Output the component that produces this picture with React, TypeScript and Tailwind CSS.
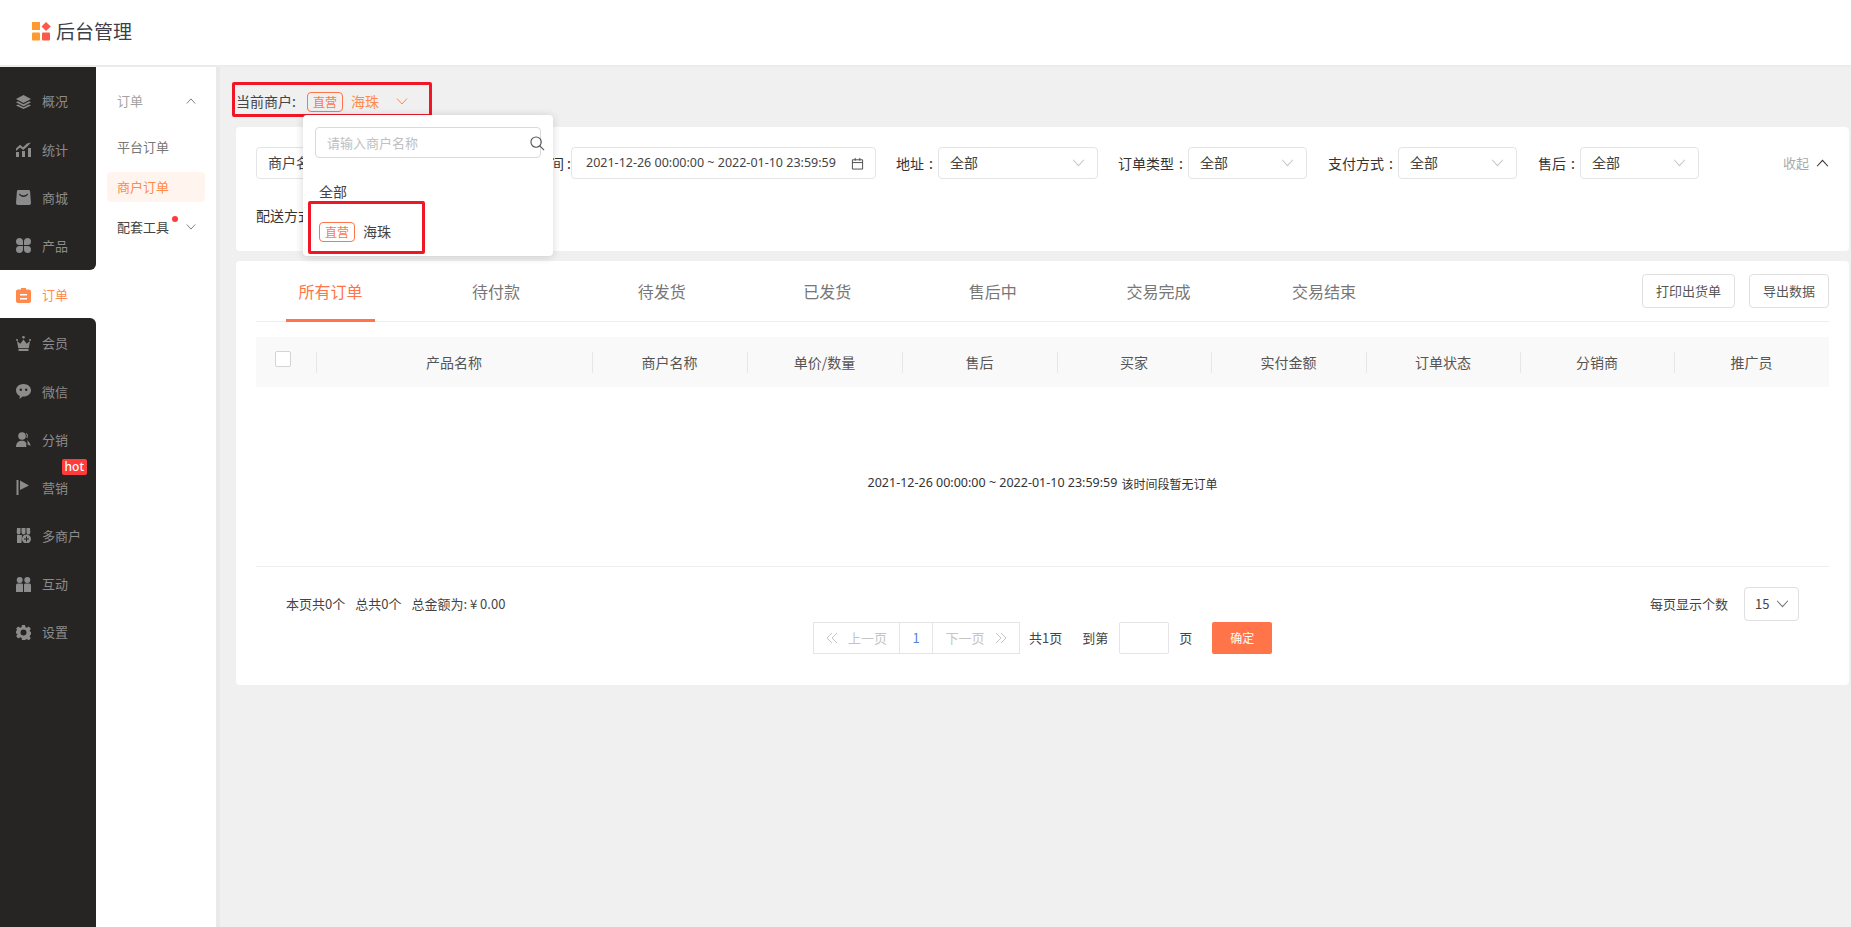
import React from "react";

const orange = "#ff7448";

const icons: Record<string, React.ReactNode> = {
  layers: (
    <>
      <path d="M7.5 1 15 5l-7.5 4L0 5z" />
      <path d="M1.8 7.2 7.5 10.2l5.7-3L15 8.3l-7.5 4-7.5-4z" />
      <path d="M2 10.4 7.5 13.3 13 10.4l2 1-7.5 3.6L0 11.4z" />
    </>
  ),
  chart: (
    <>
      <path d="M0 6.5 4 2.8l3 2.4L11 1.5 15 .5 11.8 4 7.2 8 4 5.6 0 9z" />
      <rect x="0" y="10" width="3" height="5" />
      <rect x="6" y="9" width="3" height="6" />
      <rect x="12" y="6" width="3" height="9" />
    </>
  ),
  bag: <path fillRule="evenodd" d="M2.5 0h10c1 0 1.5.5 1.6 1.5L15 13c0 1.2-.7 2-2 2H2c-1.3 0-2-.8-2-2l.9-11.5C1 .5 1.5 0 2.5 0zM3.5 3.5 3 4.5C4 6 5.7 7 7.5 7S11 6 12 4.5l-.5-1c-1 1.200-2.500 2-4 2s-3-.8-4-2z" />,
  clover: (
    <>
      <path d="M3.5 0C5.5 0 7 1.5 7 3.5V7H3.5a3.5 3.5 0 0 1 0-7z" />
      <path d="M11.5 0C9.5 0 8 1.5 8 3.5V7h3.5a3.5 3.5 0 0 0 0-7z" />
      <path d="M3.5 15C5.5 15 7 13.5 7 11.5V8H3.5a3.5 3.5 0 0 0 0 7z" />
      <path d="M11.5 15C9.5 15 8 13.5 8 11.5V8h3.5a3.5 3.5 0 0 1 0 7z" />
    </>
  ),
  order: <path fillRule="evenodd" d="M5 0h5v1.5h3c1.2 0 2 .8 2 2V13c0 1.2-.8 2-2 2H2c-1.2 0-2-.8-2-2V3.5c0-1.2.8-2 2-2h3zM4 6v1.5h7V6zM4 10v1.5h7V10z" />,
  crown: (
    <>
      <circle cx="7.5" cy="1.3" r="1.3" />
      <circle cx="1" cy="4" r="1" />
      <circle cx="14" cy="4" r="1" />
      <path d="M1 5l3.3 2.8L7.5 3.5l3.2 4.3L14 5l-1.2 7H2.2z" />
      <rect x="2.5" y="12.8" width="10" height="2.2" />
    </>
  ),
  chat: <path fillRule="evenodd" d="M7.5 0C11.7 0 15 2.8 15 6.3s-3.3 6.3-7.500 6.300h-.9L3.500 15l.3-3C1.500 11 0 8.800 0 6.300 0 2.800 3.300 0 7.500 0zM4.800 4.500a1.200 1.200 0 1 0 0 2.400 1.200 1.200 0 0 0 0-2.400zM10.200 4.500a1.200 1.200 0 1 0 0 2.400 1.200 1.200 0 0 0 0-2.400z" />,
  users: (
    <>
      <circle cx="6" cy="4" r="3.8" />
      <path d="M0 15c0-3.5 2-6 5-6.200h2c1.500.3 2.500 1 3.300 2.300V15z" />
      <path d="M10.500 1c1.500 1 2 3.500.6 5.200l-.8-.6c.8-1.300.6-2.900-.4-3.800zM11.500 8l2.500 3.500.6 2.500-3-1.500z" />
    </>
  ),
  flag: (
    <>
      <rect x="0.5" y="0" width="2" height="15" />
      <path d="M4 .5 13 5.500 4 10z" />
    </>
  ),
  store: (
    <>
      <path d="M1 0h3.500v4.500a1.800 1.800 0 0 1-3.800 0zM5.500 0h4v4.500a2 2 0 0 1-4 0zM10.500 0H14l.3 4.500a1.800 1.800 0 0 1-3.800 0z" />
      <path d="M1 7h5l-.5 8H1z" />
      <path fillRule="evenodd" d="M10.500 6.500a4.500 4.500 0 1 1 0 9 4.500 4.500 0 0 1 0-9zM10 8.500V10.500H8V11.500h2v2h1v-2h2v-1h-2v-2z" />
    </>
  ),
  pair: (
    <>
      <circle cx="3.7" cy="3" r="3" />
      <circle cx="11.3" cy="3" r="3" />
      <path d="M0 8.500C0 7 1 6.500 2 6.500h3.500c1 0 1.500.5 1.500 1.500v7H0z" />
      <path d="M8 8c0-1 .5-1.500 1.500-1.500H13c1 0 2 .5 2 2V15H8z" />
    </>
  ),
  gear: <path fillRule="evenodd" d="M6 0h3l.5 2.200 1.400.6L12.800 1.500l2 2.200-1.200 1.900.6 1.400L15 6.500v3l-.8.5-.6 1.400 1.200 1.800-2 2.100-1.900-1.200-1.400.6L9 15H6l-.5-2.200-1.400-.6-1.900 1.200-2-2.100 1.200-1.800-.6-1.400L0 9.500v-3l.4-.5.6-1.400L0 3.700l2.200-2.200 1.900 1.300 1.400-.6zM7.500 4.500a3 3 0 1 0 0 6 3 3 0 0 0 0-6z" />,
};

function Glyph({ name }: { name: string }) {
  return (
    <svg viewBox="0 0 15 15" className="w-[15px] h-[15px] shrink-0" fill="currentColor">
      {icons[name]}
    </svg>
  );
}

function Chevron({ up, className }: { up?: boolean; className?: string }) {
  return (
    <svg viewBox="0 0 12 7" className={className} fill="none" stroke="currentColor" strokeWidth="1">
      <path d={up ? "M1 6.5 6 1l5 5.5" : "M1 .5 6 6l5-5.5"} />
    </svg>
  );
}

function DoubleChevron({ right }: { right?: boolean }) {
  return (
    <svg viewBox="0 0 12 12" className="w-[12px] h-[12px]" fill="none" stroke="#c4c4c4" strokeWidth="1">
      <path d={right ? "M1 1l5 5-5 5M6 1l5 5-5 5" : "M11 1 6 6l5 5M6 1 1 6l5 5"} />
    </svg>
  );
}

function NavItem({ icon, label, active, children }: { icon: string; label: string; active?: boolean; children?: React.ReactNode }) {
  return (
    <div className={`relative flex items-center h-[48.2px] pl-4 gap-[11px] text-[13px] ${active ? "text-[#ff8a4c]" : "text-[#8c8c8c]"}`}>
      <Glyph name={icon} />
      <span>{label}</span>
      {children}
    </div>
  );
}

function Tag() {
  return (
    <span className="inline-flex items-center justify-center w-[36px] h-[20px] rounded-[4px] border border-[#ff7448] text-[#ff7448] text-[12px] leading-none">
      直营
    </span>
  );
}

function Select({ width, label }: { width: string; label?: string }) {
  return (
    <div className={`flex items-center justify-between h-[32px] pl-[11px] pr-[12px] border border-[#e4e4e4] rounded-[4px] text-[14px] text-[#444] ${width}`}>
      <span className="mt-[-2px]">{label ?? "全部"}</span>
      <Chevron className="w-[13px] h-[8px] text-[#c8c8c8]" />
    </div>
  );
}

function Field({ label, width, gap }: { label: string; width: string; gap: string }) {
  return (
    <div className={`flex items-center shrink-0 ${gap}`}>
      <span className="text-[14px] text-[#333] whitespace-nowrap">{label}</span>
      <span className="w-[14px] text-center text-[14px] text-[#333]">:</span>
      <Select width={width} />
    </div>
  );
}

export default function App() {
  const upper = [
    { icon: "layers", label: "概况" },
    { icon: "chart", label: "统计" },
    { icon: "bag", label: "商城" },
    { icon: "clover", label: "产品" },
  ];
  const lower = [
    { icon: "crown", label: "会员" },
    { icon: "chat", label: "微信" },
    { icon: "users", label: "分销" },
    { icon: "flag", label: "营销" },
    { icon: "store", label: "多商户" },
    { icon: "pair", label: "互动" },
    { icon: "gear", label: "设置" },
  ];
  const tabs = ["所有订单", "待付款", "待发货", "已发货", "售后中", "交易完成", "交易结束"];
  const columns = [
    { title: "产品名称", width: "w-[276px]" },
    { title: "商户名称", width: "w-[155px]" },
    { title: "单价/数量", width: "w-[155px]" },
    { title: "售后", width: "w-[155px]" },
    { title: "买家", width: "w-[154px]" },
    { title: "实付金额", width: "w-[155px]" },
    { title: "订单状态", width: "w-[154px]" },
    { title: "分销商", width: "w-[154px]" },
    { title: "推广员", width: "flex-1" },
  ];

  return (
    <div className="h-[927px] flex flex-col bg-[#f0f0f0] overflow-hidden font-['Noto_Sans_CJK_SC','Noto_Sans',sans-serif]">
      <header className="h-[65px] shrink-0 mb-[2px] bg-white flex items-center pl-8 pb-[3px] shadow-[0_1px_2px_rgba(0,0,0,0.04)]">
        <svg viewBox="0 0 19 19" className="w-[19px] h-[19px] mr-[5px]">
          <rect x="0" y="0" width="8" height="8" fill="#ff9a2e" />
          <rect x="0" y="10.5" width="8" height="8" rx="1" fill="#ff9a2e" />
          <path d="M14 0l4.800 4.500L14 9 9.500 4.500z" fill="#fb5a4a" />
          <rect x="10" y="10.5" width="8" height="8" rx="1" fill="#fb5a4a" />
        </svg>
        <span className="text-[19px] text-[#3d3f48]">后台管理</span>
      </header>

      <div className="flex flex-1 min-h-0">
        <aside className="w-[96px] shrink-0 flex flex-col bg-white">
          <div className="h-[203px] bg-[#262524] rounded-br-[6px] pt-[10px]">
            {upper.map((item) => (
              <NavItem key={item.label} icon={item.icon} label={item.label} />
            ))}
          </div>
          <div className="h-[48px] pt-[1px]">
            <NavItem icon="order" label="订单" active />
          </div>
          <div className="flex-1 bg-[#262524] rounded-tr-[6px] pt-[1px]">
            {lower.map((item) => (
              <NavItem key={item.label} icon={item.icon} label={item.label}>
                {item.label === "营销" && (
                  <span className="absolute right-[9px] top-[-5px] px-[3px] h-[16px] leading-[15px] rounded-[2px] bg-[#ff3b3b] text-white text-[12px] font-medium font-['Noto_Sans',sans-serif]">
                    hot
                  </span>
                )}
              </NavItem>
            ))}
          </div>
        </aside>

        <nav className="w-[120px] shrink-0 bg-white border-r-[4px] border-[#e9e9e9] box-content mr-[-4px] text-[13px]">
          <div className="flex items-center justify-between h-[30px] mt-[19px] pl-[21px] pr-[20px] text-[#a3a3a3]">
            <span>订单</span>
            <Chevron up className="w-[10px] h-[6px] text-[#666]" />
          </div>
          <div className="h-[30px] mt-[16px] pl-[21px] leading-[30px] text-[#777]">平台订单</div>
          <div className="h-[30px] mt-[10px] ml-[11px] w-[98px] pl-[10px] leading-[30px] rounded-[4px] bg-[#fff4ee] text-[#ff8a4c]">商户订单</div>
          <div className="relative flex items-center justify-between h-[30px] mt-[10px] pl-[21px] pr-[20px] text-[#444]">
            <span>配套工具</span>
            <span className="absolute left-[76px] top-[4px] w-[6px] h-[6px] rounded-full bg-[#ff3b3b]" />
            <Chevron className="w-[10px] h-[6px] text-[#666]" />
          </div>
        </nav>

        <main className="flex-1 min-w-0 ml-[4px] pl-4 pr-[2px]">
          <div className="relative h-[60px] flex items-center pt-[9px] text-[14px] text-[#444]">
            <span className="w-[71px]">当前商户:</span>
            <Tag />
            <span className="ml-2 text-[#ff8a4c]">海珠</span>
            <Chevron className="ml-[17px] w-[12px] h-[7px] text-[#ff8a4c]" />
            <div className="absolute left-[-4px] top-[15px] w-[200px] h-[35px] border-[3px] border-[#f01626] rounded-[2px] pointer-events-none" />

            <div className="absolute z-10 left-[67px] top-[48px] w-[250px] h-[141px] bg-white rounded-[4px] shadow-[0_1px_8px_rgba(0,0,0,0.16)]">
              <div className="flex items-center ml-3 mt-3 w-[226px] h-[31px] pl-[11px] border border-[#d9d9d9] rounded-[4px] relative">
                <span className="text-[13px] text-[#c0c0c0]">请输入商户名称</span>
                <svg viewBox="0 0 16 16" className="absolute right-[-5px] top-[8px] w-[15px] h-[15px]" fill="none" stroke="#555" strokeWidth="1.2">
                  <circle cx="6.5" cy="6.5" r="5.5" />
                  <path d="M10.5 10.5 15 15" />
                </svg>
              </div>
              <div className="ml-[16px] mt-[23px] leading-[20px] text-[14px] text-[#444]">全部</div>
              <div className="flex items-center gap-2 ml-[16px] mt-[20px] text-[14px] text-[#444]">
                <Tag />
                <span>海珠</span>
              </div>
              <div className="absolute left-[5px] top-[86px] w-[117px] h-[53px] border-[3px] border-[#f01626] rounded-[2px]" />
            </div>
          </div>

          <section className="h-[124px] bg-white rounded-[4px] px-5 pt-5">
            <div className="flex items-center">
              <Select width="w-[200px] mr-[8px]" label="商户名称" />
              <span className="w-[107px] text-right text-[14px] text-[#333]">下单时间 :</span>
              <div className="flex items-center justify-between w-[305px] h-[32px] pl-[14px] pr-[11px] border border-[#e4e4e4] rounded-[4px] text-[12.5px] text-[#444] font-['Noto_Sans',sans-serif]">
                <span className="whitespace-nowrap">2021-12-26 00:00:00 ~ 2022-01-10 23:59:59</span>
                <svg viewBox="0 0 14 14" className="w-[13px] h-[13px]" fill="none" stroke="#444" strokeWidth="1">
                  <path d="M1.5 3h11v10h-11zM1.5 6h11M4.5 1v3M9.5 1v3" />
                </svg>
              </div>
              <Field label="地址" width="w-[160px]" gap="ml-[20px]" />
              <Field label="订单类型" width="w-[119px]" gap="ml-[20px]" />
              <Field label="支付方式" width="w-[119px]" gap="ml-[21px]" />
              <Field label="售后" width="w-[119px]" gap="ml-[21px]" />
              <div className="ml-auto flex items-center gap-[7px] text-[13px] text-[#aaa]">
                <span>收起</span>
                <Chevron up className="w-[13px] h-[8px] text-[#333]" />
              </div>
            </div>
            <div className="mt-[24px] text-[14px] leading-[24px] text-[#333]">配送方式 :</div>
          </section>

          <section className="h-[424px] mt-[10px] bg-white rounded-[4px] px-5 flex flex-col">
            <div className="h-[61px] shrink-0 flex items-center justify-between border-b border-[#eeeeee] pl-[30px]">
              <div className="flex gap-[76.6px] h-full">
                {tabs.map((tab, index) => (
                  <div
                    key={tab}
                    className={`w-[89px] text-center text-[16px] leading-[60px] border-b-[3px] h-[61px] whitespace-nowrap ${index === 0 ? "text-[#ff7448] border-[#ff7448]" : "text-[#777] border-transparent"}`}
                  >
                    {tab}
                  </div>
                ))}
              </div>
              <div className="flex gap-[14px]">
                <button className="w-[93px] h-[34px] rounded-[4px] border border-[#e0e0e0] text-[13px] text-[#555]">打印出货单</button>
                <button className="w-[80px] h-[34px] rounded-[4px] border border-[#e0e0e0] text-[13px] text-[#555]">导出数据</button>
              </div>
            </div>

            <div className="h-[50px] mt-[15px] shrink-0 flex items-center bg-[#f9f9f9] text-[14px] text-[#555]">
              <div className="w-[60px] h-full relative">
                <span className="absolute left-[19px] top-[14px] w-[16px] h-[16px] bg-white border border-[#d4d4d4] rounded-[2px]" />
              </div>
              {columns.map((col) => (
                <div key={col.title} className={`${col.width} relative text-center`}>
                  <span className="absolute left-0 top-0 h-[21px] border-l border-[#e6e6e6]" />
                  {col.title}
                </div>
              ))}
            </div>

            <div className="h-[180px] shrink-0 flex items-center justify-center gap-[4px] pt-[14px] border-b border-[#eeeeee] text-[12px] text-[#333]">
              <span className="text-[12.5px] font-['Noto_Sans',sans-serif]">2021-12-26 00:00:00 ~ 2022-01-10 23:59:59</span>
              <span>该时间段暂无订单</span>
            </div>

            <div className="relative flex-1 text-[13px] text-[#444]">
              <div className="flex justify-between items-center pl-[30px] pr-[30px] pt-[19px] h-[55px]">
                <div className="flex gap-[10px]">
                  <span>本页共0个</span>
                  <span>总共0个</span>
                  <span>总金额为: ¥ 0.00</span>
                </div>
                <div className="flex items-center gap-[16px]">
                  <span>每页显示个数</span>
                  <div className="flex items-center justify-between w-[55px] h-[34px] pl-[10px] pr-[9px] border border-[#e0e0e0] rounded-[4px]">
                    <span>15</span>
                    <Chevron className="w-[13px] h-[8px] text-[#777]" />
                  </div>
                </div>
              </div>
              <div className="flex items-center ml-[557px] h-[32px]">
                <div className="flex items-center h-[32px] w-[207px] border border-[#e3e3e8] text-[13px] text-[#c4c4c4]">
                  <div className="w-[86px] flex items-center justify-center gap-[10px] h-full border-r border-[#e3e3e8]">
                    <DoubleChevron />
                    <span>上一页</span>
                  </div>
                  <div className="w-[33px] h-full flex items-center justify-center border-r border-[#e3e3e8] text-[#5b7fd8]">1</div>
                  <div className="flex-1 flex items-center justify-center gap-[10px]">
                    <span>下一页</span>
                    <DoubleChevron right />
                  </div>
                </div>
                <span className="ml-[9px]">共1页</span>
                <span className="ml-[20px]">到第</span>
                <div className="ml-[11px] w-[50px] h-[32px] border border-[#e3e3e8] rounded-[2px]" />
                <span className="ml-[10px]">页</span>
                <button className="ml-[20px] w-[60px] h-[32px] rounded-[2px] text-white text-[12px]" style={{ backgroundColor: orange }}>确定</button>
              </div>
            </div>
          </section>
        </main>
      </div>
    </div>
  );
}
